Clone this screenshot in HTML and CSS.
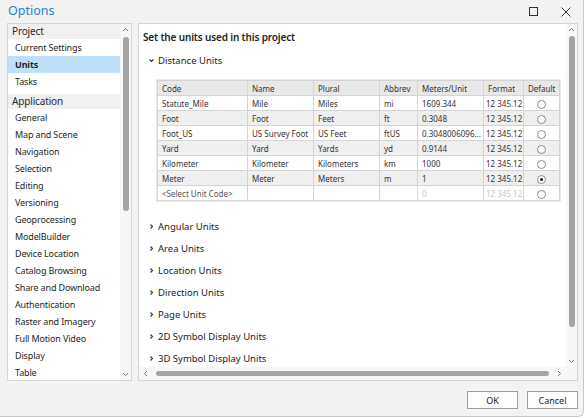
FILE: index.html
```html
<!DOCTYPE html>
<html lang="en">
<head>
    <meta charset="UTF-8">
    <title>Options</title>
    <link rel="stylesheet" href="styles.css">
</head>
<body>
    <div class="dialog">
        <div class="titlebar">
            <span class="title">Options</span>
            <div class="window-buttons">
                <svg class="win-btn" width="10" height="10" viewBox="0 0 10 10"><rect x="0.5" y="0.5" width="8" height="8" fill="none" stroke="#333" stroke-width="1"/></svg>
                <svg class="win-btn" width="10" height="10" viewBox="0 0 10 10"><path d="M0.5 0.5 L9.5 9.5 M9.5 0.5 L0.5 9.5" stroke="#333" stroke-width="1"/></svg>
            </div>
        </div>

        <div class="main">
            <div class="nav-panel">
                <div class="nav-list">
                    <div class="nav-group">Project</div>
                    <div class="nav-item">Current Settings</div>
                    <div class="nav-item selected">Units</div>
                    <div class="nav-item">Tasks</div>
                    <div class="nav-gap"></div>
                    <div class="nav-group">Application</div>
                    <div class="nav-item">General</div>
                    <div class="nav-item">Map and Scene</div>
                    <div class="nav-item">Navigation</div>
                    <div class="nav-item">Selection</div>
                    <div class="nav-item">Editing</div>
                    <div class="nav-item">Versioning</div>
                    <div class="nav-item">Geoprocessing</div>
                    <div class="nav-item">ModelBuilder</div>
                    <div class="nav-item">Device Location</div>
                    <div class="nav-item">Catalog Browsing</div>
                    <div class="nav-item">Share and Download</div>
                    <div class="nav-item">Authentication</div>
                    <div class="nav-item">Raster and Imagery</div>
                    <div class="nav-item">Full Motion Video</div>
                    <div class="nav-item">Display</div>
                    <div class="nav-item">Table</div>
                </div>
                <div class="vscroll">
                    <svg class="arrow" width="7" height="5" viewBox="0 0 7 5"><path d="M1 4 L3.5 1.5 L6 4" fill="none" stroke="#777" stroke-width="1"/></svg>
                    <div class="vtrack"><div class="thumb nav-thumb"></div></div>
                    <svg class="arrow" width="7" height="5" viewBox="0 0 7 5"><path d="M1 1 L3.5 3.5 L6 1" fill="none" stroke="#777" stroke-width="1"/></svg>
                </div>
            </div>

            <div class="content-panel">
                <div class="content">
                    <h2 class="heading">Set the units used in this project</h2>

                    <div class="section open">
                        <svg class="chev" width="7" height="7" viewBox="0 0 7 7"><path d="M1.5 2.5 L3.5 4.5 L5.5 2.5" fill="none" stroke="#333" stroke-width="1.1"/></svg>
                        <span>Distance Units</span>
                    </div>

                    <table class="units">
                        <colgroup>
                            <col style="width:90px"><col style="width:66px"><col style="width:66px">
                            <col style="width:38px"><col style="width:66px"><col style="width:40px"><col style="width:36px">
                        </colgroup>
                        <thead>
                            <tr><th>Code</th><th>Name</th><th>Plural</th><th>Abbrev</th><th>Meters/Unit</th><th>Format</th><th>Default</th></tr>
                        </thead>
                        <tbody>
                            <tr><td>Statute_Mile</td><td>Mile</td><td>Miles</td><td>mi</td><td>1609.344</td><td class="fmt">12 345.12</td><td class="radio-cell"><span class="radio"></span></td></tr>
                            <tr><td>Foot</td><td>Foot</td><td>Feet</td><td>ft</td><td>0.3048</td><td class="fmt">12 345.12</td><td class="radio-cell"><span class="radio"></span></td></tr>
                            <tr><td>Foot_US</td><td>US Survey Foot</td><td>US Feet</td><td>ftUS</td><td>0.3048006096...</td><td class="fmt">12 345.12</td><td class="radio-cell"><span class="radio"></span></td></tr>
                            <tr><td>Yard</td><td>Yard</td><td>Yards</td><td>yd</td><td>0.9144</td><td class="fmt">12 345.12</td><td class="radio-cell"><span class="radio"></span></td></tr>
                            <tr><td>Kilometer</td><td>Kilometer</td><td>Kilometers</td><td>km</td><td>1000</td><td class="fmt">12 345.12</td><td class="radio-cell"><span class="radio"></span></td></tr>
                            <tr><td>Meter</td><td>Meter</td><td>Meters</td><td>m</td><td>1</td><td class="fmt">12 345.12</td><td class="radio-cell"><span class="radio checked"></span></td></tr>
                            <tr class="new-row"><td class="placeholder">&lt;Select Unit Code&gt;</td><td></td><td></td><td></td><td class="faint">0</td><td class="fmt faint">12 345.12</td><td class="radio-cell"><span class="radio"></span></td></tr>
                        </tbody>
                    </table>

                    <div class="section">
                        <svg class="chev" width="7" height="7" viewBox="0 0 7 7"><path d="M2.5 1.5 L4.5 3.5 L2.5 5.5" fill="none" stroke="#333" stroke-width="1.1"/></svg>
                        <span>Angular Units</span>
                    </div>
                    <div class="section">
                        <svg class="chev" width="7" height="7" viewBox="0 0 7 7"><path d="M2.5 1.5 L4.5 3.5 L2.5 5.5" fill="none" stroke="#333" stroke-width="1.1"/></svg>
                        <span>Area Units</span>
                    </div>
                    <div class="section">
                        <svg class="chev" width="7" height="7" viewBox="0 0 7 7"><path d="M2.5 1.5 L4.5 3.5 L2.5 5.5" fill="none" stroke="#333" stroke-width="1.1"/></svg>
                        <span>Location Units</span>
                    </div>
                    <div class="section">
                        <svg class="chev" width="7" height="7" viewBox="0 0 7 7"><path d="M2.5 1.5 L4.5 3.5 L2.5 5.5" fill="none" stroke="#333" stroke-width="1.1"/></svg>
                        <span>Direction Units</span>
                    </div>
                    <div class="section">
                        <svg class="chev" width="7" height="7" viewBox="0 0 7 7"><path d="M2.5 1.5 L4.5 3.5 L2.5 5.5" fill="none" stroke="#333" stroke-width="1.1"/></svg>
                        <span>Page Units</span>
                    </div>
                    <div class="section">
                        <svg class="chev" width="7" height="7" viewBox="0 0 7 7"><path d="M2.5 1.5 L4.5 3.5 L2.5 5.5" fill="none" stroke="#333" stroke-width="1.1"/></svg>
                        <span>2D Symbol Display Units</span>
                    </div>
                    <div class="section">
                        <svg class="chev" width="7" height="7" viewBox="0 0 7 7"><path d="M2.5 1.5 L4.5 3.5 L2.5 5.5" fill="none" stroke="#333" stroke-width="1.1"/></svg>
                        <span>3D Symbol Display Units</span>
                    </div>
                </div>

                <div class="vscroll">
                    <svg class="arrow" width="7" height="5" viewBox="0 0 7 5"><path d="M1 4 L3.5 1.5 L6 4" fill="none" stroke="#777" stroke-width="1"/></svg>
                    <div class="vtrack"><div class="thumb content-thumb"></div></div>
                    <svg class="arrow" width="7" height="5" viewBox="0 0 7 5"><path d="M1 1 L3.5 3.5 L6 1" fill="none" stroke="#777" stroke-width="1"/></svg>
                </div>

                <div class="hscroll">
                    <svg class="arrow" width="5" height="7" viewBox="0 0 5 7"><path d="M4 1 L1.5 3.5 L4 6" fill="none" stroke="#777" stroke-width="1"/></svg>
                    <div class="htrack"><div class="hthumb"></div></div>
                    <svg class="arrow" width="5" height="7" viewBox="0 0 5 7"><path d="M1 1 L3.5 3.5 L1 6" fill="none" stroke="#777" stroke-width="1"/></svg>
                </div>
                <div class="corner"></div>
            </div>
        </div>

        <div class="footer">
            <button class="btn">OK</button>
            <button class="btn">Cancel</button>
        </div>
    </div>
</body>
</html>
```

FILE: styles.css
```css
body {
    margin: 0;
    padding: 0;
    background: #ffffff;
    font-family: 'Noto Sans', 'Open Sans', sans-serif;
    color: #1f1f1f;
}

.dialog {
    width: 583px;
    height: 416px;
    background: #f3f3f3;
    border-right: 1px solid #c9c9c9;
    border-bottom: 1px solid #c9c9c9;
    border-bottom-right-radius: 6px;
    display: flex;
    flex-direction: column;
    overflow: hidden;
}

/* Title bar */
.titlebar {
    height: 23px;
    display: flex;
    align-items: center;
    justify-content: space-between;
    padding: 0 12px 0 8px;
}

.title {
    font-size: 12.5px;
    color: #1f7fcf;
    margin-top: -2px;
}

.window-buttons {
    display: flex;
    gap: 22px;
    align-items: center;
}

/* Panels */
.main {
    height: 358px;
    display: flex;
    gap: 6px;
    padding: 0 5px 0 7px;
}

.nav-panel {
    width: 123px;
    background: #ffffff;
    border: 1px solid #d5d5d5;
    display: flex;
    overflow: hidden;
}

.nav-list {
    flex: 1;
    font-size: 9px;
    letter-spacing: -0.15px;
}

.nav-group {
    height: 15px;
    line-height: 15px;
    padding-left: 4px;
    background: #f0f0f0;
    font-size: 10px;
    color: #2b2b2b;
}

.nav-gap {
    height: 4px;
}

.nav-item {
    height: 17px;
    line-height: 17px;
    padding-left: 7px;
    white-space: nowrap;
}

.nav-item.selected {
    background: #bfe0f8;
    font-weight: 700;
}

.vscroll {
    width: 11px;
    background: #f7f7f7;
    display: flex;
    flex-direction: column;
    align-items: center;
    padding: 3px 0;
    gap: 2px;
}

.vtrack {
    flex: 1;
    width: 100%;
    display: flex;
    justify-content: center;
}

.thumb {
    width: 6px;
    border-radius: 3px;
    background: #a4a4a4;
}

.nav-thumb {
    margin-top: 3px;
    height: 174px;
}

.content-thumb {
    margin-top: 2px;
    height: 291px;
}

/* Content panel */
.content-panel {
    flex: 1;
    background: #ffffff;
    border: 1px solid #d5d5d5;
    display: grid;
    grid-template-columns: 1fr 11px;
    grid-template-rows: 1fr 13px;
    overflow: hidden;
}

.content {
    overflow: hidden;
    padding: 6px 0 0 4px;
    font-size: 9.5px;
}

.heading {
    margin: 0 0 4px 0;
    font-size: 10px;
    font-weight: 600;
    color: #222;
    height: 15px;
    line-height: 15px;
    letter-spacing: -0.15px;
}

.section {
    height: 22px;
    display: flex;
    align-items: center;
    gap: 3px;
    padding-left: 5px;
    color: #222;
}

.section.open {
    margin-bottom: 9px;
}

.units {
    border-collapse: collapse;
    margin: 0 0 14px 14px;
    table-layout: fixed;
    width: 402px;
    font-size: 8px;
    color: #333;
    border: 1px solid #cfcfcf;
    box-shadow: 0 0 0 1px #ececec;
}

.units th,
.units td {
    height: 14px;
    padding: 0 0 0 4px;
    border: 1px solid #d4d4d4;
    text-align: left;
    font-weight: 400;
    white-space: nowrap;
    overflow: hidden;
}

.units th {
    background: #e8e8e8;
    color: #333;
}

.units tbody tr:nth-child(even) td {
    background: #efefef;
}

.units .fmt {
    padding-left: 2px;
}

.units .placeholder {
    color: #555;
}

.units .faint {
    color: #c8c8c8;
}

.radio-cell {
    text-align: center !important;
    padding: 0 !important;
}

.radio {
    display: inline-block;
    width: 9px;
    height: 9px;
    border: 1px solid #8a8a8a;
    border-radius: 50%;
    background: #ffffff;
    vertical-align: middle;
    box-sizing: border-box;
    position: relative;
}

.radio.checked::after {
    content: '';
    position: absolute;
    left: 2px;
    top: 2px;
    width: 3px;
    height: 3px;
    border-radius: 50%;
    background: #111;
}

.hscroll {
    display: flex;
    align-items: center;
    background: #f7f7f7;
    padding: 0 4px;
    gap: 8px;
}

.htrack {
    flex: 1;
}

.hthumb {
    height: 5px;
    border-radius: 3px;
    background: #a4a4a4;
}

.corner {
    background: #f7f7f7;
}

/* Footer buttons */
.footer {
    flex: 1;
    display: flex;
    justify-content: flex-end;
    align-items: flex-start;
    gap: 9px;
    padding: 10px 5px 0 0;
}

.btn {
    width: 51px;
    height: 18px;
    background: #fdfdfd;
    border: 1px solid #9e9e9e;
    font-family: 'Noto Sans', 'Open Sans', sans-serif;
    font-size: 9px;
    color: #222;
    padding: 0;
}
```
